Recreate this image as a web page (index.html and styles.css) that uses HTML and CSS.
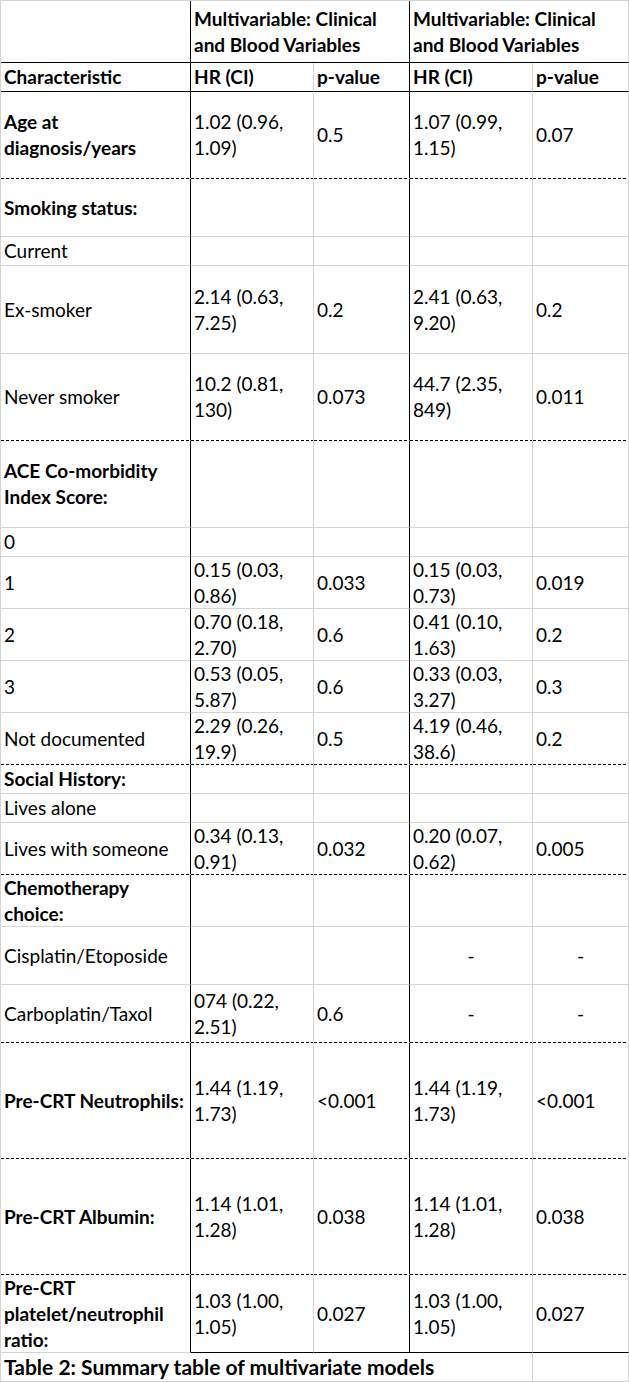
FILE: index.html
```html
<!DOCTYPE html>
<html lang="en">
<head>
<meta charset="utf-8">
<title>Table 2: Summary table of multivariate models</title>
<link rel="stylesheet" href="styles.css">
</head>
<body>
<div class="sheet">
  <div class="row h1 black">
    <div class="c c0"></div>
    <div class="c b span2 vline">Multivariable: Clinical<br>and Blood Variables</div>
    <div class="c b span2">Multivariable: Clinical<br>and Blood Variables</div>
  </div>
  <div class="row h2 black">
    <div class="c c0 b">Characteristic</div>
    <div class="c b">HR (CI)</div>
    <div class="c b vline">p-value</div>
    <div class="c b">HR (CI)</div>
    <div class="c b">p-value</div>
  </div>
  <div class="row r87 dash">
    <div class="c c0 b">Age at<br>diagnosis/years</div>
    <div class="c">1.02 (0.96,<br>1.09)</div>
    <div class="c vline">0.5</div>
    <div class="c">1.07 (0.99,<br>1.15)</div>
    <div class="c">0.07</div>
  </div>
  <div class="row r58">
    <div class="c c0 b">Smoking status:</div>
    <div class="c"></div>
    <div class="c vline"></div>
    <div class="c"></div>
    <div class="c"></div>
  </div>
  <div class="row r29">
    <div class="c c0">Current</div>
    <div class="c"></div>
    <div class="c vline"></div>
    <div class="c"></div>
    <div class="c"></div>
  </div>
  <div class="row r88">
    <div class="c c0">Ex-smoker</div>
    <div class="c">2.14 (0.63,<br>7.25)</div>
    <div class="c vline">0.2</div>
    <div class="c">2.41 (0.63,<br>9.20)</div>
    <div class="c">0.2</div>
  </div>
  <div class="row r87 dash">
    <div class="c c0">Never smoker</div>
    <div class="c">10.2 (0.81,<br>130)</div>
    <div class="c vline">0.073</div>
    <div class="c">44.7 (2.35,<br>849)</div>
    <div class="c">0.011</div>
  </div>
  <div class="row r87">
    <div class="c c0 b">ACE Co-morbidity<br>Index Score:</div>
    <div class="c"></div>
    <div class="c vline"></div>
    <div class="c"></div>
    <div class="c"></div>
  </div>
  <div class="row r29">
    <div class="c c0">0</div>
    <div class="c"></div>
    <div class="c vline"></div>
    <div class="c"></div>
    <div class="c"></div>
  </div>
  <div class="row r52">
    <div class="c c0">1</div>
    <div class="c">0.15 (0.03,<br>0.86)</div>
    <div class="c vline">0.033</div>
    <div class="c">0.15 (0.03,<br>0.73)</div>
    <div class="c">0.019</div>
  </div>
  <div class="row r52">
    <div class="c c0">2</div>
    <div class="c">0.70 (0.18,<br>2.70)</div>
    <div class="c vline">0.6</div>
    <div class="c">0.41 (0.10,<br>1.63)</div>
    <div class="c">0.2</div>
  </div>
  <div class="row r52">
    <div class="c c0">3</div>
    <div class="c">0.53 (0.05,<br>5.87)</div>
    <div class="c vline">0.6</div>
    <div class="c">0.33 (0.03,<br>3.27)</div>
    <div class="c">0.3</div>
  </div>
  <div class="row r52 dash">
    <div class="c c0">Not documented</div>
    <div class="c">2.29 (0.26,<br>19.9)</div>
    <div class="c vline">0.5</div>
    <div class="c">4.19 (0.46,<br>38.6)</div>
    <div class="c">0.2</div>
  </div>
  <div class="row r29">
    <div class="c c0 b">Social History:</div>
    <div class="c"></div>
    <div class="c vline"></div>
    <div class="c"></div>
    <div class="c"></div>
  </div>
  <div class="row r29">
    <div class="c c0">Lives alone</div>
    <div class="c"></div>
    <div class="c vline"></div>
    <div class="c"></div>
    <div class="c"></div>
  </div>
  <div class="row r52 dash">
    <div class="c c0">Lives with someone</div>
    <div class="c">0.34 (0.13,<br>0.91)</div>
    <div class="c vline">0.032</div>
    <div class="c">0.20 (0.07,<br>0.62)</div>
    <div class="c">0.005</div>
  </div>
  <div class="row r52">
    <div class="c c0 b">Chemotherapy<br>choice:</div>
    <div class="c"></div>
    <div class="c vline"></div>
    <div class="c"></div>
    <div class="c"></div>
  </div>
  <div class="row r58">
    <div class="c c0">Cisplatin/Etoposide</div>
    <div class="c"></div>
    <div class="c vline"></div>
    <div class="c dashval">-</div>
    <div class="c dashval">-</div>
  </div>
  <div class="row r58 dash">
    <div class="c c0">Carboplatin/Taxol</div>
    <div class="c">074 (0.22,<br>2.51)</div>
    <div class="c vline">0.6</div>
    <div class="c dashval">-</div>
    <div class="c dashval">-</div>
  </div>
  <div class="row r116 dash">
    <div class="c c0 b">Pre-CRT Neutrophils:</div>
    <div class="c">1.44 (1.19,<br>1.73)</div>
    <div class="c vline">&lt;0.001</div>
    <div class="c">1.44 (1.19,<br>1.73)</div>
    <div class="c">&lt;0.001</div>
  </div>
  <div class="row r116 dash">
    <div class="c c0 b">Pre-CRT Albumin:</div>
    <div class="c">1.14 (1.01,<br>1.28)</div>
    <div class="c vline">0.038</div>
    <div class="c">1.14 (1.01,<br>1.28)</div>
    <div class="c">0.038</div>
  </div>
  <div class="row r78 endrow">
    <div class="c c0 b">Pre-CRT<br>platelet/neutrophil<br>ratio:</div>
    <div class="c">1.03 (1.00,<br>1.05)</div>
    <div class="c vline">0.027</div>
    <div class="c">1.03 (1.00,<br>1.05)</div>
    <div class="c">0.027</div>
  </div>
  <div class="row r29 caption">
    <div class="c c0 b span4 captext">Table 2: Summary table of multivariate models</div>
    <div class="c"></div>
  </div>
</div>
</body>
</html>
```

FILE: styles.css
```css
html, body {
  margin: 0;
  padding: 0;
  background: #fff;
}

.sheet {
  display: grid;
  grid-template-columns: 190px 123px 96px 123px 96px;
  grid-template-rows: 62px 29px 87px 58px 29px 88px 87px 87px 29px 52px 52px 52px 52px 29px 29px 52px 52px 58px 58px 116px 116px 78px 29px;
  width: 629px;
  box-sizing: border-box;
  border-top: 1px solid #d4d4d4;
  border-left: 1px solid #d4d4d4;
  font-family: "Lato", "Liberation Sans", sans-serif;
  font-size: 19px;
  line-height: 26px;
  color: #000;
}

.row {
  display: contents;
}

.c {
  box-sizing: border-box;
  display: flex;
  align-items: center;
  padding: 0 3px;
  white-space: nowrap;
  overflow: visible;
  border-right: 1px solid #d4d4d4;
  border-bottom: 1px solid #d4d4d4;
}

.b {
  font-weight: 700;
}

.c0 {
  border-right-color: #000;
}

.vline {
  border-right-color: #000;
}

.span2 {
  grid-column: span 2;
}

.span4 {
  grid-column: span 4;
  border-right-color: #d4d4d4;
}

.captext {
  font-size: 21px;
}

.black > .c {
  border-bottom-color: #000;
}

.dash > .c {
  border-bottom-color: transparent;
  background-image: linear-gradient(90deg, #000 3px, transparent 3px);
  background-size: 5px 1px;
  background-repeat: repeat-x;
  background-position: left bottom;
  background-origin: border-box;
}

.endrow > .c:not(.c0) {
  border-bottom-color: #000;
}

.dashval {
  justify-content: center;
}
```
